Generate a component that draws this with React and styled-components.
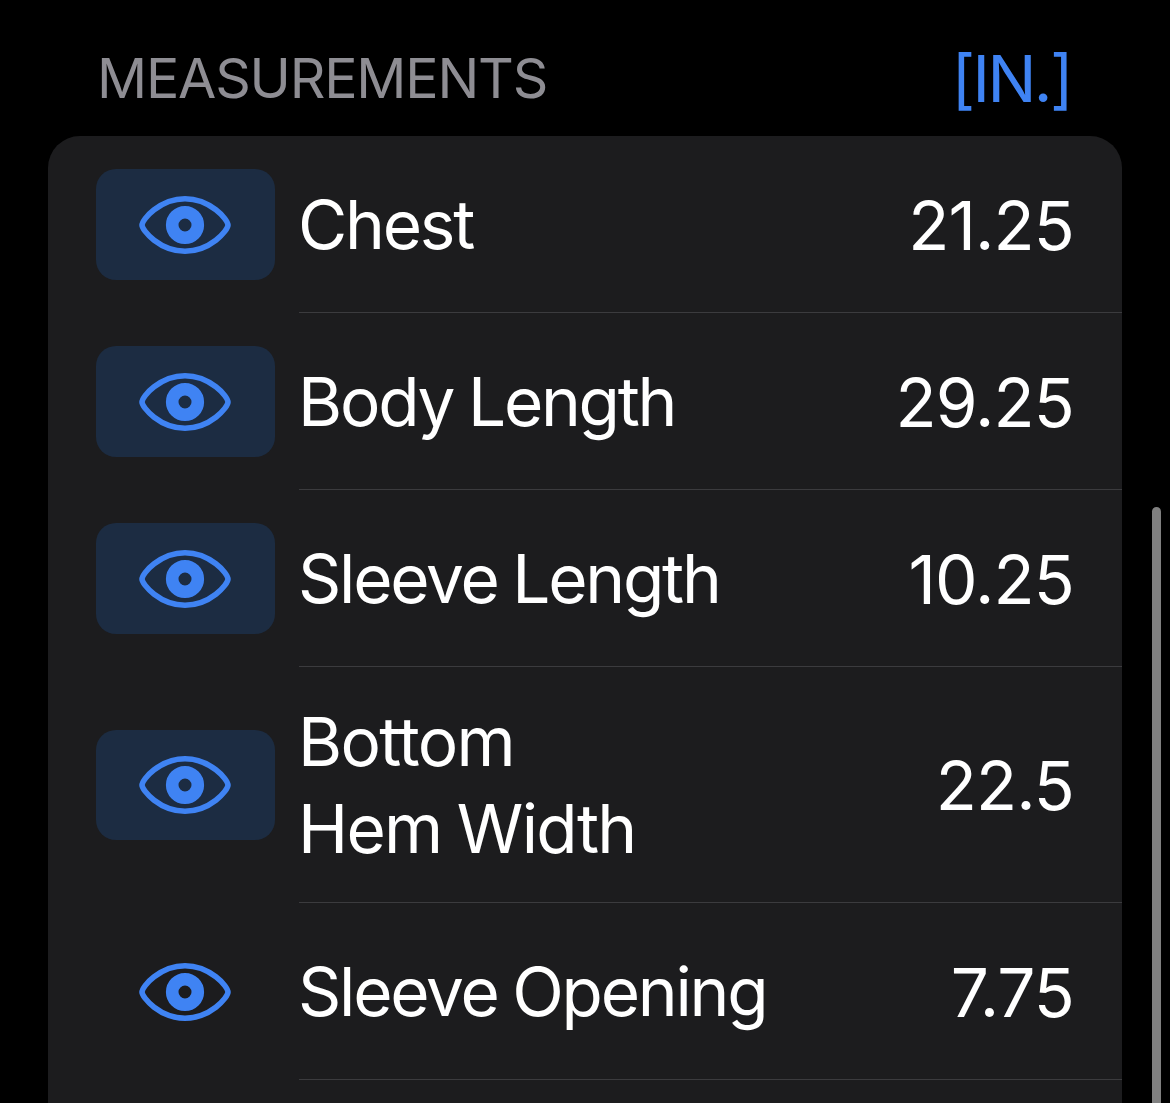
import React from 'react';
import styled, { createGlobalStyle } from 'styled-components';

const GlobalStyle = createGlobalStyle`
    * {
        box-sizing: border-box;
    }

    body {
        margin: 0;
        background-color: #000;
        font-family: Inter, "Liberation Sans", sans-serif;
    }
`;

const Screen = styled.main`
    position: relative;
    height: 1103px;
    padding: 0 48px;
    overflow: hidden;
    background-color: #000;
`;

const Header = styled.header`
    display: flex;
    align-items: center;
    justify-content: space-between;
    height: 136px;
    padding: 18px 51px 0 49px;
`;

const Title = styled.h2`
    margin: 0;
    color: #8e8d93;
    font-size: 55.5px;
    font-weight: 400;
    letter-spacing: -1.2px;
`;

const UnitButton = styled.button`
    padding: 3px 0 0;
    border: 0;
    background: none;
    color: #3f83f3;
    font-family: inherit;
    font-size: 65px;
    letter-spacing: -2.6px;
`;

const Card = styled.section`
    height: 1000px;
    border-radius: 32px;
    background-color: #1c1c1e;
`;

const Row = styled.div`
    display: flex;
    align-items: center;
    height: ${(props) => (props.$tall ? '236px' : '177px')};
    padding-left: 48px;
`;

const EyeButton = styled.button`
    display: flex;
    align-items: center;
    justify-content: center;
    flex: none;
    width: 179px;
    height: ${(props) => (props.$tall ? '110px' : '111px')};
    padding: 0 1px 0 0;
    border: 0;
    border-radius: 20px;
    background-color: ${(props) => (props.$active ? '#1c2c42' : 'transparent')};
    color: #3f83f3;

    svg {
        display: block;
    }
`;

const RowBody = styled.div`
    display: flex;
    align-items: center;
    justify-content: space-between;
    flex: 1;
    height: 100%;
    margin-left: 24px;
    padding-right: 48px;
    border-bottom: 1px solid #3b3b3e;
    color: #fff;
    font-size: 67.5px;
    line-height: 87px;
`;

const Label = styled.span`
    margin-left: -1px;
    padding-top: 1px;
    letter-spacing: ${(props) => (props.$tall ? '-1.7px' : '-2.25px')};
    word-spacing: -2px;
    white-space: pre-line;
`;

const Value = styled.span`
    padding-top: 2px;
    letter-spacing: -0.9px;
`;

const ScrollThumb = styled.div`
    position: absolute;
    top: 507px;
    right: 9px;
    width: 9px;
    height: 700px;
    border-radius: 5px;
    background-color: #808080;
`;

const measurements = [
    { label: 'Chest', value: '21.25', active: true },
    { label: 'Body Length', value: '29.25', active: true },
    { label: 'Sleeve Length', value: '10.25', active: true },
    { label: 'Bottom\nHem Width', value: '22.5', active: true, tall: true },
    { label: 'Sleeve Opening', value: '7.75', active: false },
];

const EyeIcon = () => (
    <svg width="92" height="58" viewBox="0 0 92 58" fill="none" stroke="currentColor">
        <path
            d="M3 29C3 23.5 21 2.8 46 2.8S89 23.5 89 29S71 55.2 46 55.2S3 34.5 3 29Z"
            strokeWidth="5.6"
        />
        <circle cx="46" cy="29" r="12.8" strokeWidth="12.6" />
    </svg>
);

const App = () => {
  return (
    <>
        <GlobalStyle />
        <Screen>
            <Header>
                <Title>MEASUREMENTS</Title>
                <UnitButton>[IN.]</UnitButton>
            </Header>
            <Card>
                {measurements.map(({ label, value, active, tall }) => (
                    <Row key={label} $tall={tall}>
                        <EyeButton $active={active} $tall={tall} aria-label={`Toggle ${label}`}>
                            <EyeIcon />
                        </EyeButton>
                        <RowBody>
                            <Label $tall={tall}>{label}</Label>
                            <Value>{value}</Value>
                        </RowBody>
                    </Row>
                ))}
            </Card>
            <ScrollThumb />
        </Screen>
    </>
  )
}

export default App
